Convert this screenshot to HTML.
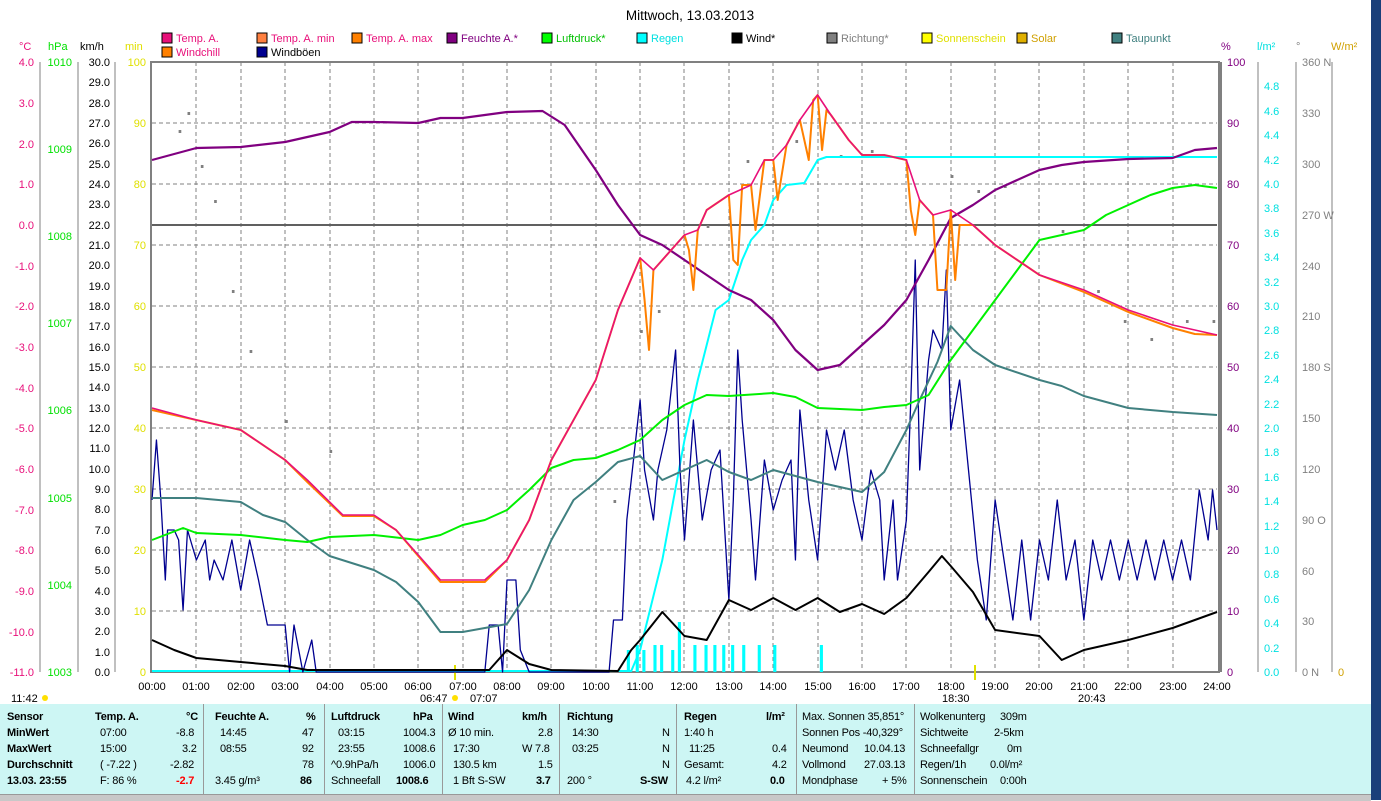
<!DOCTYPE html>
<html><head><meta charset="utf-8"><style>
body{margin:0;width:1381px;height:800px;overflow:hidden;background:#fff;font-family:"Liberation Sans",sans-serif;position:relative}
svg{position:absolute;left:0;top:0}
.t{position:absolute;font-size:11px;letter-spacing:-0.2px;white-space:nowrap;color:#000}
.b{font-weight:bold}
</style></head><body>
<svg width="1381" height="800" font-family="Liberation Sans, sans-serif" font-size="11">
<text x="690" y="20" text-anchor="middle" font-size="13.5">Mittwoch, 13.03.2013</text>
<g font-size="11">
<rect x="162" y="33" width="10" height="10" fill="#e8107a" stroke="#000"/><text x="176" y="42" fill="#e8107a">Temp. A.</text>
<rect x="257" y="33" width="10" height="10" fill="#ff8040" stroke="#000"/><text x="271" y="42" fill="#e8107a">Temp. A. min</text>
<rect x="352" y="33" width="10" height="10" fill="#ff8000" stroke="#000"/><text x="366" y="42" fill="#e8107a">Temp. A. max</text>
<rect x="447" y="33" width="10" height="10" fill="#800080" stroke="#000"/><text x="461" y="42" fill="#800080">Feuchte A.*</text>
<rect x="542" y="33" width="10" height="10" fill="#00ff00" stroke="#000"/><text x="556" y="42" fill="#00c000">Luftdruck*</text>
<rect x="637" y="33" width="10" height="10" fill="#00ffff" stroke="#000"/><text x="651" y="42" fill="#00e0e0">Regen</text>
<rect x="732" y="33" width="10" height="10" fill="#000" stroke="#000"/><text x="746" y="42">Wind*</text>
<rect x="827" y="33" width="10" height="10" fill="#808080" stroke="#000"/><text x="841" y="42" fill="#808080">Richtung*</text>
<rect x="922" y="33" width="10" height="10" fill="#ffff00" stroke="#000"/><text x="936" y="42" fill="#e0e000">Sonnenschein</text>
<rect x="1017" y="33" width="10" height="10" fill="#e0b000" stroke="#000"/><text x="1031" y="42" fill="#d0a000">Solar</text>
<rect x="1112" y="33" width="10" height="10" fill="#408080" stroke="#000"/><text x="1126" y="42" fill="#408080">Taupunkt</text>
<rect x="162" y="47" width="10" height="10" fill="#ff8000" stroke="#000"/><text x="176" y="56" fill="#e8107a">Windchill</text>
<rect x="257" y="47" width="10" height="10" fill="#000090" stroke="#000"/><text x="271" y="56">Windböen</text>
</g>
<text x="19" y="50" fill="#e8107a">°C</text><text x="48" y="50" fill="#00e000">hPa</text><text x="80" y="50">km/h</text><text x="125" y="50" fill="#e0e000">min</text>
<text x="1221" y="50" fill="#800080">%</text><text x="1257" y="50" fill="#00e0e0">l/m²</text><text x="1296" y="50" fill="#808080">°</text><text x="1331" y="50" fill="#d0a000">W/m²</text>
<g stroke="#808080" stroke-dasharray="4,3" stroke-width="1">
<path d="M152 123H1217M152 184H1217M152 245H1217M152 306H1217M152 367H1217M152 428H1217M152 489H1217M152 550H1217M152 611H1217"/>
<path d="M196 62V672M241 62V672M285 62V672M330 62V672M374 62V672M418 62V672M463 62V672M507 62V672M551 62V672M596 62V672M640 62V672M684 62V672M729 62V672M773 62V672M818 62V672M862 62V672M906 62V672M951 62V672M995 62V672M1039 62V672M1084 62V672M1128 62V672M1173 62V672"/>
</g>
<path d="M152 225H1217" stroke="#606060" stroke-width="2"/>
<rect x="151" y="62" width="1068" height="610" fill="none" stroke="#808080" stroke-width="2"/>
<path d="M1221 62V672" stroke="#808080" stroke-width="2"/>
<g stroke="#808080"><path d="M40 62V672M78 62V672M115 62V672M1258 62V672M1296 62V672M1332 62V672"/></g>
<g font-size="11" text-anchor="end" fill="#e8107a">
<text x="34" y="66">4.0</text><text x="34" y="107">3.0</text><text x="34" y="148">2.0</text><text x="34" y="188">1.0</text><text x="34" y="229">0.0</text><text x="34" y="270">-1.0</text><text x="34" y="310">-2.0</text><text x="34" y="351">-3.0</text><text x="34" y="392">-4.0</text><text x="34" y="432">-5.0</text><text x="34" y="473">-6.0</text><text x="34" y="514">-7.0</text><text x="34" y="554">-8.0</text><text x="34" y="595">-9.0</text><text x="34" y="636">-10.0</text><text x="34" y="676">-11.0</text>
</g>
<g font-size="11" text-anchor="end" fill="#00e000">
<text x="72" y="66">1010</text><text x="72" y="153">1009</text><text x="72" y="240">1008</text><text x="72" y="327">1007</text><text x="72" y="414">1006</text><text x="72" y="502">1005</text><text x="72" y="589">1004</text><text x="72" y="676">1003</text>
</g>
<g font-size="11" text-anchor="end" fill="#e0e000">
<text x="146" y="66">100</text><text x="146" y="127">90</text><text x="146" y="188">80</text><text x="146" y="249">70</text><text x="146" y="310">60</text><text x="146" y="371">50</text><text x="146" y="432">40</text><text x="146" y="493">30</text><text x="146" y="554">20</text><text x="146" y="615">10</text><text x="146" y="676">0</text>
</g>
<g font-size="11" fill="#800080">
<text x="1227" y="66">100</text><text x="1227" y="127">90</text><text x="1227" y="188">80</text><text x="1227" y="249">70</text><text x="1227" y="310">60</text><text x="1227" y="371">50</text><text x="1227" y="432">40</text><text x="1227" y="493">30</text><text x="1227" y="554">20</text><text x="1227" y="615">10</text><text x="1227" y="676">0</text>
</g>
<g font-size="11" fill="#00e0e0">
<text x="1264" y="90">4.8</text><text x="1264" y="115">4.6</text><text x="1264" y="139">4.4</text><text x="1264" y="164">4.2</text><text x="1264" y="188">4.0</text><text x="1264" y="212">3.8</text><text x="1264" y="237">3.6</text><text x="1264" y="261">3.4</text><text x="1264" y="286">3.2</text><text x="1264" y="310">3.0</text><text x="1264" y="334">2.8</text><text x="1264" y="359">2.6</text><text x="1264" y="383">2.4</text><text x="1264" y="408">2.2</text><text x="1264" y="432">2.0</text><text x="1264" y="456">1.8</text><text x="1264" y="481">1.6</text><text x="1264" y="505">1.4</text><text x="1264" y="530">1.2</text><text x="1264" y="554">1.0</text><text x="1264" y="578">0.8</text><text x="1264" y="603">0.6</text><text x="1264" y="627">0.4</text><text x="1264" y="652">0.2</text><text x="1264" y="676">0.0</text>
</g>
<g font-size="11" fill="#808080">
<text x="1302" y="66">360 N</text><text x="1302" y="117">330</text><text x="1302" y="168">300</text><text x="1302" y="219">270 W</text><text x="1302" y="270">240</text><text x="1302" y="320">210</text><text x="1302" y="371">180 S</text><text x="1302" y="422">150</text><text x="1302" y="473">120</text><text x="1302" y="524">90  O</text><text x="1302" y="575">60</text><text x="1302" y="625">30</text><text x="1302" y="676">0   N</text>
</g>
<text x="1338" y="676" fill="#d0a000">0</text>
<text x="11" y="702" font-size="11">11:42</text><circle cx="45" cy="698" r="3" fill="#ffe000"/>
<text x="420" y="702" font-size="11">06:47</text><circle cx="455" cy="698" r="3" fill="#ffe000"/><text x="470" y="702" font-size="11">07:07</text>
<text x="942" y="702" font-size="11">18:30</text>
<text x="1078" y="702" font-size="11">20:43</text>
<path d="M455 665V680" stroke="#e0e000" stroke-width="2"/><path d="M975 665V680" stroke="#e0e000" stroke-width="2"/>
<g transform="translate(152,0) scale(44.375,1)" fill="none" stroke-linejoin="round">
<g fill="#808080" stroke="none">
<rect x="0.6" y="130" width="0.06" height="3"/><rect x="0.8" y="112" width="0.06" height="3"/><rect x="1.1" y="165" width="0.06" height="3"/><rect x="1.4" y="200" width="0.06" height="3"/><rect x="1.8" y="290" width="0.06" height="3"/><rect x="2.2" y="350" width="0.06" height="3"/><rect x="3" y="420" width="0.06" height="3"/><rect x="4" y="450" width="0.06" height="3"/><rect x="10.4" y="500" width="0.06" height="3"/><rect x="11.4" y="310" width="0.06" height="3"/><rect x="12.5" y="225" width="0.06" height="3"/><rect x="13.4" y="160" width="0.06" height="3"/><rect x="14.5" y="140" width="0.06" height="3"/><rect x="15.5" y="155" width="0.06" height="3"/><rect x="16.2" y="150" width="0.06" height="3"/><rect x="17" y="165" width="0.06" height="3"/><rect x="18" y="175" width="0.06" height="3"/><rect x="18.6" y="190" width="0.06" height="3"/><rect x="19.2" y="185" width="0.06" height="3"/><rect x="20.5" y="230" width="0.06" height="3"/><rect x="21.3" y="290" width="0.06" height="3"/><rect x="21.9" y="320" width="0.06" height="3"/><rect x="22.5" y="338" width="0.06" height="3"/><rect x="23.3" y="320" width="0.06" height="3"/><rect x="23.9" y="320" width="0.06" height="3"/><rect x="14" y="180" width="0.06" height="3"/><rect x="11" y="330" width="0.06" height="3"/>
</g>
<g fill="#00ffff" stroke="none">
<rect x="10.7" y="650" width="0.07" height="22"/><rect x="10.9" y="645" width="0.07" height="27"/><rect x="11.05" y="650" width="0.07" height="22"/><rect x="11.3" y="645" width="0.07" height="27"/><rect x="11.45" y="645" width="0.07" height="27"/><rect x="11.7" y="650" width="0.07" height="22"/><rect x="11.85" y="622" width="0.07" height="50"/><rect x="12.2" y="645" width="0.07" height="27"/><rect x="12.45" y="645" width="0.07" height="27"/><rect x="12.65" y="645" width="0.07" height="27"/><rect x="12.85" y="645" width="0.07" height="27"/><rect x="13.05" y="645" width="0.07" height="27"/><rect x="13.3" y="645" width="0.07" height="27"/><rect x="13.65" y="645" width="0.07" height="27"/><rect x="14.0" y="645" width="0.07" height="27"/><rect x="15.05" y="645" width="0.07" height="27"/>
</g>
<polyline vector-effect="non-scaling-stroke" stroke="#00ffff" stroke-width="2" points="0,671 10.8,671 11,650 11.5,560 12,440 12.3,380 12.7,310 13,300 13.3,260 13.5,240 13.8,225 14,200 14.3,185 14.7,183 15,160 15.2,157 24,157"/>
<polyline vector-effect="non-scaling-stroke" stroke="#000090" stroke-width="1.3" points="0,500 0.1,440 0.2,500 0.3,580 0.35,530 0.5,530 0.6,540 0.7,610 0.8,530 1,560 1.2,540 1.3,580 1.4,560 1.6,580 1.8,540 2,590 2.2,540 2.4,580 2.6,625 3,625 3.1,672 3.2,625 3.4,672 3.6,640 3.7,672 7.5,672 7.6,625 7.8,625 7.9,672 8,580 8.2,580 8.3,650 8.5,672 10.3,672 10.4,620 10.6,620 10.7,520 10.8,480 11,400 11.1,470 11.3,520 11.4,470 11.6,430 11.8,350 11.9,470 12,540 12.2,420 12.4,520 12.6,470 12.8,450 13,600 13.1,500 13.2,350 13.3,420 13.5,520 13.6,580 13.8,460 14,510 14.2,480 14.4,460 14.5,560 14.6,410 14.8,500 15,560 15.2,430 15.4,470 15.6,430 15.8,500 16,540 16.2,470 16.4,500 16.5,580 16.7,500 16.8,580 17,520 17.1,400 17.2,260 17.3,470 17.5,360 17.6,330 17.8,350 17.9,270 18,430 18.2,380 18.4,470 18.6,560 18.8,620 19,500 19.2,560 19.4,620 19.6,540 19.8,620 20,540 20.2,580 20.4,500 20.6,580 20.8,540 21,620 21.2,540 21.4,580 21.6,540 21.8,580 22,540 22.2,580 22.4,540 22.6,580 22.8,540 23,580 23.2,540 23.4,580 23.6,490 23.8,540 23.9,490 24,530"/>
<polyline vector-effect="non-scaling-stroke" stroke="#000" stroke-width="2" points="0,640 0.5,650 1,658 2,662 3,666 3.5,670 7.6,670 8,650 8.5,664 9,670 10.5,671 10.8,650 11,640 11.5,612 12,636 12.5,640 13,600 13.5,610 14,598 14.5,610 15,598 15.5,612 16,604 16.5,614 17,598 17.5,572 17.8,556 18,566 18.5,592 19,630 20,636 20.5,660 21,650 22,640 23,628 24,612"/>
<polyline vector-effect="non-scaling-stroke" stroke="#408080" stroke-width="2" points="0,498 1,498 2,502 2.5,515 3,522 3.5,540 4,556 5,570 5.5,582 6,602 6.5,632 7,632 8,624 8.5,590 9,540 9.5,500 10,482 10.5,462 11,456 11.5,480 12,470 12.5,460 13,472 13.5,480 14,470 14.5,476 15,482 16,492 16.5,472 17,430 17.3,400 17.7,362 18,326 18.5,350 19,365 20,380 20.5,386 21,396 22,408 23,412 24,415"/>
<polyline vector-effect="non-scaling-stroke" stroke="#00f000" stroke-width="2" points="0,540 0.7,528 1,533 2,535 3,540 3.5,542 4,537 5,535 6,540 6.5,535 7,525 7.5,520 8,510 8.5,490 9,468 9.5,460 10,458 10.5,450 11,440 11.5,420 12,405 12.5,395 13,396 14,393 14.5,397 15,408 16,410 16.5,407 17,405 17.5,395 18,360 18.5,330 19,300 19.5,270 20,240 21,230 21.5,215 22,205 22.5,195 23,188 23.5,185 24,188"/>
<polyline vector-effect="non-scaling-stroke" stroke="#800080" stroke-width="2.2" points="0,160 1,148 2,147 3,142 4,132 4.5,122 5,122 6,123 6.5,118 7,118 8,112 8.8,111 9.3,125 10,170 10.5,205 11,235 11.5,245 12,260 13,290 13.5,300 14,320 14.5,350 15,370 15.5,365 16,345 16.5,325 17,300 17.5,260 18,218 18.5,205 19,190 20,170 20.5,165 21,162 22,159 23,158 23.5,150 24,148"/>
<polyline vector-effect="non-scaling-stroke" stroke="#ff8000" stroke-width="2" points="0,410 1,420 2,430 3,460 3.5,482 4.3,516 5,516 5.5,530 6,556 6.5,582 7.5,582 8,560 8.5,520 9,460 9.5,420 10,380 10.5,310 11,258 11.1,300 11.2,350 11.3,270 11.7,250 12,235 12.1,250 12.2,290 12.3,230 12.5,210 13,195 13.1,260 13.2,265 13.3,185 13.5,185 13.6,230 13.8,160 14,160 14.1,200 14.3,145 14.6,120 14.8,160 14.9,100 15,95 15.1,150 15.2,110 15.3,115 15.7,140 16,155 16.5,155 17,160 17.1,210 17.2,235 17.3,200 17.6,215 17.7,290 17.9,290 18,210 18.1,280 18.2,225 18.5,225 19,245 19.5,260 20,275 21,292 22,312 23,328 23.5,334 24,335"/>
<polyline vector-effect="non-scaling-stroke" stroke="#e8107a" stroke-width="1.6" points="0,408 1,420 2,430 3,460 3.5,480 4.3,515 5,515 5.5,530 6,555 6.5,580 7.5,580 8,560 8.5,520 9,460 9.5,420 10,380 10.5,310 11,258 11.3,270 11.7,250 12,235 12.3,230 12.5,210 13,195 13.5,185 13.8,160 14,160 14.3,145 14.6,120 15,95 15.3,115 15.7,140 16,155 16.5,155 17,160 17.3,200 17.6,215 18,210 18.5,225 19,245 19.5,260 20,275 21,290 22,310 23,325 24,335"/>
</g>
</svg>
<div style="position:absolute;left:0;top:704px;width:1371px;height:90px;background:#cdf6f4"></div>
<div style="position:absolute;left:0;top:794px;width:1371px;height:6px;background:#c8c8c8;border-top:1px solid #999"></div>
<div style="position:absolute;left:1371px;top:0;width:10px;height:800px;background:#1a3f7a"></div>
<div style="position:absolute;top:704px;left:203px;width:1px;height:90px;background:#999"></div>
<div style="position:absolute;top:704px;left:324px;width:1px;height:90px;background:#999"></div>
<div style="position:absolute;top:704px;left:442px;width:1px;height:90px;background:#999"></div>
<div style="position:absolute;top:704px;left:559px;width:1px;height:90px;background:#999"></div>
<div style="position:absolute;top:704px;left:676px;width:1px;height:90px;background:#999"></div>
<div style="position:absolute;top:704px;left:796px;width:1px;height:90px;background:#999"></div>
<div style="position:absolute;top:704px;left:914px;width:1px;height:90px;background:#999"></div>
<div>
<div class="t b" style="left:7px;top:711px">Sensor</div><div class="t b" style="left:7px;top:727px">MinWert</div><div class="t b" style="left:7px;top:743px">MaxWert</div><div class="t b" style="left:7px;top:759px">Durchschnitt</div><div class="t b" style="left:7px;top:775px">13.03. 23:55</div>
<div class="t b" style="left:95px;top:711px">Temp. A.</div><div class="t b" style="left:186px;top:711px">°C</div>
<div class="t" style="left:100px;top:727px">07:00</div><div class="t" style="left:176px;top:727px">-8.8</div>
<div class="t" style="left:100px;top:743px">15:00</div><div class="t" style="left:182px;top:743px">3.2</div>
<div class="t" style="left:100px;top:759px">( -7.22 )</div><div class="t" style="left:170px;top:759px">-2.82</div>
<div class="t" style="left:100px;top:775px">F: 86 %</div><div class="t b" style="left:176px;top:775px;color:#f00">-2.7</div>
<div class="t b" style="left:215px;top:711px">Feuchte A.</div><div class="t b" style="left:306px;top:711px">%</div>
<div class="t" style="left:220px;top:727px">14:45</div><div class="t" style="left:302px;top:727px">47</div>
<div class="t" style="left:220px;top:743px">08:55</div><div class="t" style="left:302px;top:743px">92</div>
<div class="t" style="left:302px;top:759px">78</div>
<div class="t" style="left:215px;top:775px">3.45 g/m³</div><div class="t b" style="left:300px;top:775px">86</div>
<div class="t b" style="left:331px;top:711px">Luftdruck</div><div class="t b" style="left:413px;top:711px">hPa</div>
<div class="t" style="left:338px;top:727px">03:15</div><div class="t" style="left:403px;top:727px">1004.3</div>
<div class="t" style="left:338px;top:743px">23:55</div><div class="t" style="left:403px;top:743px">1008.6</div>
<div class="t" style="left:331px;top:759px">^0.9hPa/h</div><div class="t" style="left:403px;top:759px">1006.0</div>
<div class="t" style="left:331px;top:775px">Schneefall</div><div class="t b" style="left:396px;top:775px">1008.6</div>
<div class="t b" style="left:448px;top:711px">Wind</div><div class="t b" style="left:522px;top:711px">km/h</div>
<div class="t" style="left:448px;top:727px">Ø 10 min.</div><div class="t" style="left:538px;top:727px">2.8</div>
<div class="t" style="left:453px;top:743px">17:30</div><div class="t" style="left:522px;top:743px">W 7.8</div>
<div class="t" style="left:453px;top:759px">130.5 km</div><div class="t" style="left:538px;top:759px">1.5</div>
<div class="t" style="left:453px;top:775px">1 Bft S-SW</div><div class="t b" style="left:536px;top:775px">3.7</div>
<div class="t b" style="left:567px;top:711px">Richtung</div>
<div class="t" style="left:572px;top:727px">14:30</div><div class="t" style="left:662px;top:727px">N</div>
<div class="t" style="left:572px;top:743px">03:25</div><div class="t" style="left:662px;top:743px">N</div>
<div class="t" style="left:662px;top:759px">N</div>
<div class="t" style="left:567px;top:775px">200 °</div><div class="t b" style="left:640px;top:775px">S-SW</div>
<div class="t b" style="left:684px;top:711px">Regen</div><div class="t b" style="left:766px;top:711px">l/m²</div>
<div class="t" style="left:684px;top:727px">1:40 h</div>
<div class="t" style="left:689px;top:743px">11:25</div><div class="t" style="left:772px;top:743px">0.4</div>
<div class="t" style="left:684px;top:759px">Gesamt:</div><div class="t" style="left:772px;top:759px">4.2</div>
<div class="t" style="left:686px;top:775px">4.2 l/m²</div><div class="t b" style="left:770px;top:775px">0.0</div>
<div class="t" style="left:802px;top:711px">Max. Sonnen 35,851°</div>
<div class="t" style="left:802px;top:727px">Sonnen Pos -40,329°</div>
<div class="t" style="left:802px;top:743px">Neumond</div><div class="t" style="left:864px;top:743px">10.04.13</div>
<div class="t" style="left:802px;top:759px">Vollmond</div><div class="t" style="left:864px;top:759px">27.03.13</div>
<div class="t" style="left:802px;top:775px">Mondphase</div><div class="t" style="left:882px;top:775px">+ 5%</div>
<div class="t" style="left:920px;top:711px">Wolkenunterg</div><div class="t" style="left:1000px;top:711px">309m</div>
<div class="t" style="left:920px;top:727px">Sichtweite</div><div class="t" style="left:994px;top:727px">2-5km</div>
<div class="t" style="left:920px;top:743px">Schneefallgr</div><div class="t" style="left:1007px;top:743px">0m</div>
<div class="t" style="left:920px;top:759px">Regen/1h</div><div class="t" style="left:990px;top:759px">0.0l/m²</div>
<div class="t" style="left:920px;top:775px">Sonnenschein</div><div class="t" style="left:1000px;top:775px">0:00h</div>
</div>
<svg width="1381" height="800" style="pointer-events:none" font-family="Liberation Sans, sans-serif" font-size="11">
<g text-anchor="end">
<text x="110" y="66">30.0</text><text x="110" y="86">29.0</text><text x="110" y="107">28.0</text><text x="110" y="127">27.0</text><text x="110" y="147">26.0</text><text x="110" y="168">25.0</text><text x="110" y="188">24.0</text><text x="110" y="208">23.0</text><text x="110" y="229">22.0</text><text x="110" y="249">21.0</text><text x="110" y="269">20.0</text><text x="110" y="290">19.0</text><text x="110" y="310">18.0</text><text x="110" y="330">17.0</text><text x="110" y="351">16.0</text><text x="110" y="371">15.0</text><text x="110" y="391">14.0</text><text x="110" y="412">13.0</text><text x="110" y="432">12.0</text><text x="110" y="452">11.0</text><text x="110" y="473">10.0</text><text x="110" y="493">9.0</text><text x="110" y="513">8.0</text><text x="110" y="534">7.0</text><text x="110" y="554">6.0</text><text x="110" y="574">5.0</text><text x="110" y="595">4.0</text><text x="110" y="615">3.0</text><text x="110" y="635">2.0</text><text x="110" y="656">1.0</text><text x="110" y="676">0.0</text>
</g>
<g text-anchor="middle">
<text x="152" y="690">00:00</text><text x="196" y="690">01:00</text><text x="241" y="690">02:00</text><text x="285" y="690">03:00</text><text x="330" y="690">04:00</text><text x="374" y="690">05:00</text><text x="418" y="690">06:00</text><text x="463" y="690">07:00</text><text x="507" y="690">08:00</text><text x="551" y="690">09:00</text><text x="596" y="690">10:00</text><text x="640" y="690">11:00</text><text x="684" y="690">12:00</text><text x="729" y="690">13:00</text><text x="773" y="690">14:00</text><text x="818" y="690">15:00</text><text x="862" y="690">16:00</text><text x="906" y="690">17:00</text><text x="951" y="690">18:00</text><text x="995" y="690">19:00</text><text x="1039" y="690">20:00</text><text x="1084" y="690">21:00</text><text x="1128" y="690">22:00</text><text x="1173" y="690">23:00</text><text x="1217" y="690">24:00</text>
</g>
</svg>
</body></html>
